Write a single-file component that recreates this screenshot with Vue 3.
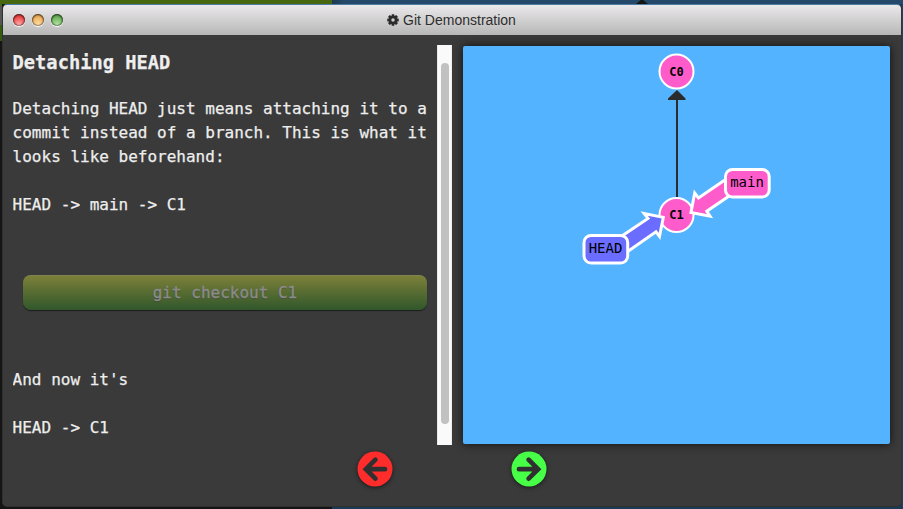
<script setup>
const paragraph = [
  'Detaching HEAD just means attaching it to a',
  'commit instead of a branch. This is what it',
  'looks like beforehand:',
]
const lights = ['red', 'amber', 'green']
</script>

<template>
  <div class="desktop">
    <div class="backdrop">
      <div class="bar-green"></div>
      <div class="bar-blue">
        <svg class="peek" width="12" height="4" viewBox="0 0 12 4"><path d="M0 4 L6 -1 L12 4Z" fill="#151515" /></svg>
      </div>
    </div>
    <div class="sides">
      <div class="left-side"></div>
      <section class="window">
        <header class="titlebar">
          <div class="lights"><i v-for="c in lights" :key="c" class="light" :class="c"></i></div>
          <div class="title">
            <svg width="12" height="12" viewBox="-12 -12 24 24">
              <g fill="#2b2b2b">
                <rect v-for="n in 4" :key="n" x="-2.8" y="-11.5" width="5.6" height="23" rx="1" :transform="`rotate(${n * 45})`" />
                <circle r="8.6" />
              </g>
              <circle r="3.5" fill="#cdcdcd" />
            </svg>
            <span>Git Demonstration</span>
          </div>
        </header>
        <main class="content">
          <article class="lesson">
            <h3>Detaching HEAD</h3>
            <p><span v-for="line in paragraph" :key="line">{{ line }}</span></p>
            <p class="spaced">HEAD -&gt; main -&gt; C1</p>
            <button class="command">git checkout C1</button>
            <p class="after">And now it's</p>
            <p class="spaced">HEAD -&gt; C1</p>
          </article>
          <div class="track"><div class="thumb"></div></div>
          <svg class="tree" width="427" height="398" viewBox="463 46 427 398">
            <path d="M677 197V98" stroke="#2b2b2b" stroke-width="2" />
            <path d="M677 90L685.5 98.5V100H668V98.5Z" fill="#2b2b2b" />
            <g fill="#ff5ccb" stroke="#fff" stroke-width="2">
              <circle cx="676.5" cy="71.5" r="17" />
              <circle cx="676.5" cy="215" r="17" />
            </g>
            <g class="commit-text" text-anchor="middle">
              <text x="676.5" y="76">C0</text>
              <text x="676.5" y="219">C1</text>
            </g>
            <g stroke="#fff" stroke-width="3" stroke-linejoin="miter">
              <path fill="#ff5ccb" d="M727 178.5L698.5 198L694.7 193L691 212.5L710 216.2L706.8 211.2L735 192Z" />
              <rect x="725.5" y="169.5" width="43.7" height="27.5" rx="7" fill="#ff5ccb" />
              <path fill="#6a6dff" d="M620 237.2L648 218.4L644.2 213.6L663.3 217.4L659.5 236.5L656 231.8L627 252Z" />
              <rect x="584" y="235.5" width="43.7" height="27.5" rx="7" fill="#6a6dff" />
            </g>
            <g class="branch-text" text-anchor="middle">
              <text x="747" y="187">main</text>
              <text x="605.5" y="253">HEAD</text>
            </g>
          </svg>
        </main>
        <footer class="nav">
          <svg width="36" height="36" viewBox="-18 -18 36 36">
            <circle r="17.5" fill="#ff2c2c" />
            <path d="M10 .2H-8M.4 -9.3L-9.1 .2L.4 9.7" fill="none" stroke="#303030" stroke-width="4.7" stroke-linecap="round" />
          </svg>
          <svg width="36" height="36" viewBox="-18 -18 36 36">
            <circle r="17.5" fill="#46ff46" />
            <path d="M-10 .2H8M-.4 -9.3L9.1 .2L-.4 9.7" fill="none" stroke="#303030" stroke-width="4.7" stroke-linecap="round" />
          </svg>
        </footer>
      </section>
      <div class="right-side"></div>
    </div>
    <div class="bottom"><div class="bottom-dark"></div><div class="bottom-blue"></div></div>
  </div>
</template>

<style>
body { overflow: hidden; }
</style>

<style scoped>
* { box-sizing: border-box; }
.desktop { width: 903px; height: 509px; display: flex; flex-direction: column; background: #151515; }
.backdrop { display: flex; height: 4px; }
.bar-green { width: 332px; background: #476711; }
.bar-blue { flex: 1; background: linear-gradient(90deg, #1c394f, #24496a 12px); padding-left: 304px; }
.peek { display: block; }
.sides { display: flex; height: 503px; background: linear-gradient(90deg, #151515 50%, #183b58 50%); }
.left-side { width: 2px; background: linear-gradient(#476711 0 2px, #555 2px 21px, #345b0d 21px 37px, #151515 37px); }
.right-side { width: 1px; background: #1f4260; }
.window { width: 900px; height: 503px; border: 1px solid #303030; border-top-color: #4e7da3; border-right-color: #303539; border-radius: 5px; background: #3a3a3a; overflow: hidden; display: flex; flex-direction: column; }
.titlebar { height: 30px; flex: none; background: linear-gradient(#ebe9eb, #b7b7b7); display: grid; grid-template-columns: 180px 1fr 180px; align-items: center; }
.lights { display: flex; gap: 7px; padding-left: 10px; }
.light { width: 12px; height: 12px; border-radius: 50%; box-shadow: 0 1px 1px #fff, inset 0 1px 2px #0009, inset 0 0 1px 1px #0005; }
.red { background: radial-gradient(circle at 50% 90%, #ffb0b0, #ed4546 65%); }
.amber { background: radial-gradient(circle at 50% 90%, #ffe0a8, #eeae5c 65%); }
.green { background: radial-gradient(circle at 50% 90%, #b8e8a5, #69af58 65%); }
.title { display: flex; justify-content: center; align-items: center; gap: 4px; padding-right: 1px; font: 14px/20px "Liberation Sans", Arial, sans-serif; color: #2e2e2e; white-space: nowrap; }
.content { display: flex; height: 410px; padding: 10px 0 0 9.6px; flex: none; }
.lesson { width: 424.4px; height: 400px; flex: none; display: flex; flex-direction: column; overflow: hidden; color: #eee; font: 16px/24px "DejaVu Sans Mono", monospace; white-space: pre; -webkit-text-stroke: .25px; }
h3 { margin: 6px 0 22px; font-size: 18.72px; line-height: 24px; }
p { margin: 0; }
p span { display: block; }
.spaced { margin-top: 24px; }
.command { width: 404px; height: 35px; margin: 58px 0 0 10.4px; flex: none; border: 0; border-radius: 8px; background: linear-gradient(#7e8139, #30572b); box-shadow: inset 0 1px #85876080, 0 1px 1px #1c1c1c; color: #8b8b8b; font: 16px/35px "DejaVu Sans Mono", monospace; -webkit-text-stroke: .35px; padding: 0; text-shadow: 0 1px 1px #3338; }
.after { margin-top: 58px; }
.track { width: 15px; height: 400px; background: #fafafa; border-left: 1px solid #e8e8e8; border-right: 1px solid #ededed; padding: 18px 3px 21px; flex: none; }
.thumb { width: 8px; height: 361px; border-radius: 4px; background: #c1c1c1; }
.tree { display: block; flex: none; margin: 1px 0 0 11px; background: #53b3ff; border-radius: 2px; box-shadow: 0 0 10px #000b; }
.commit-text { font: bold 12px "DejaVu Sans Mono", monospace; }
.branch-text { font: 14px "DejaVu Sans Mono", monospace; }
.nav { display: flex; gap: 118px; padding: 6px 0 0 354px; }
.nav svg { display: block; filter: drop-shadow(0 1px 2px #0009); }
.bottom { height: 2px; display: flex; }
.bottom-dark { width: 332px; background: #141414; }
.bottom-blue { flex: 1; background: #193b58; }
</style>
